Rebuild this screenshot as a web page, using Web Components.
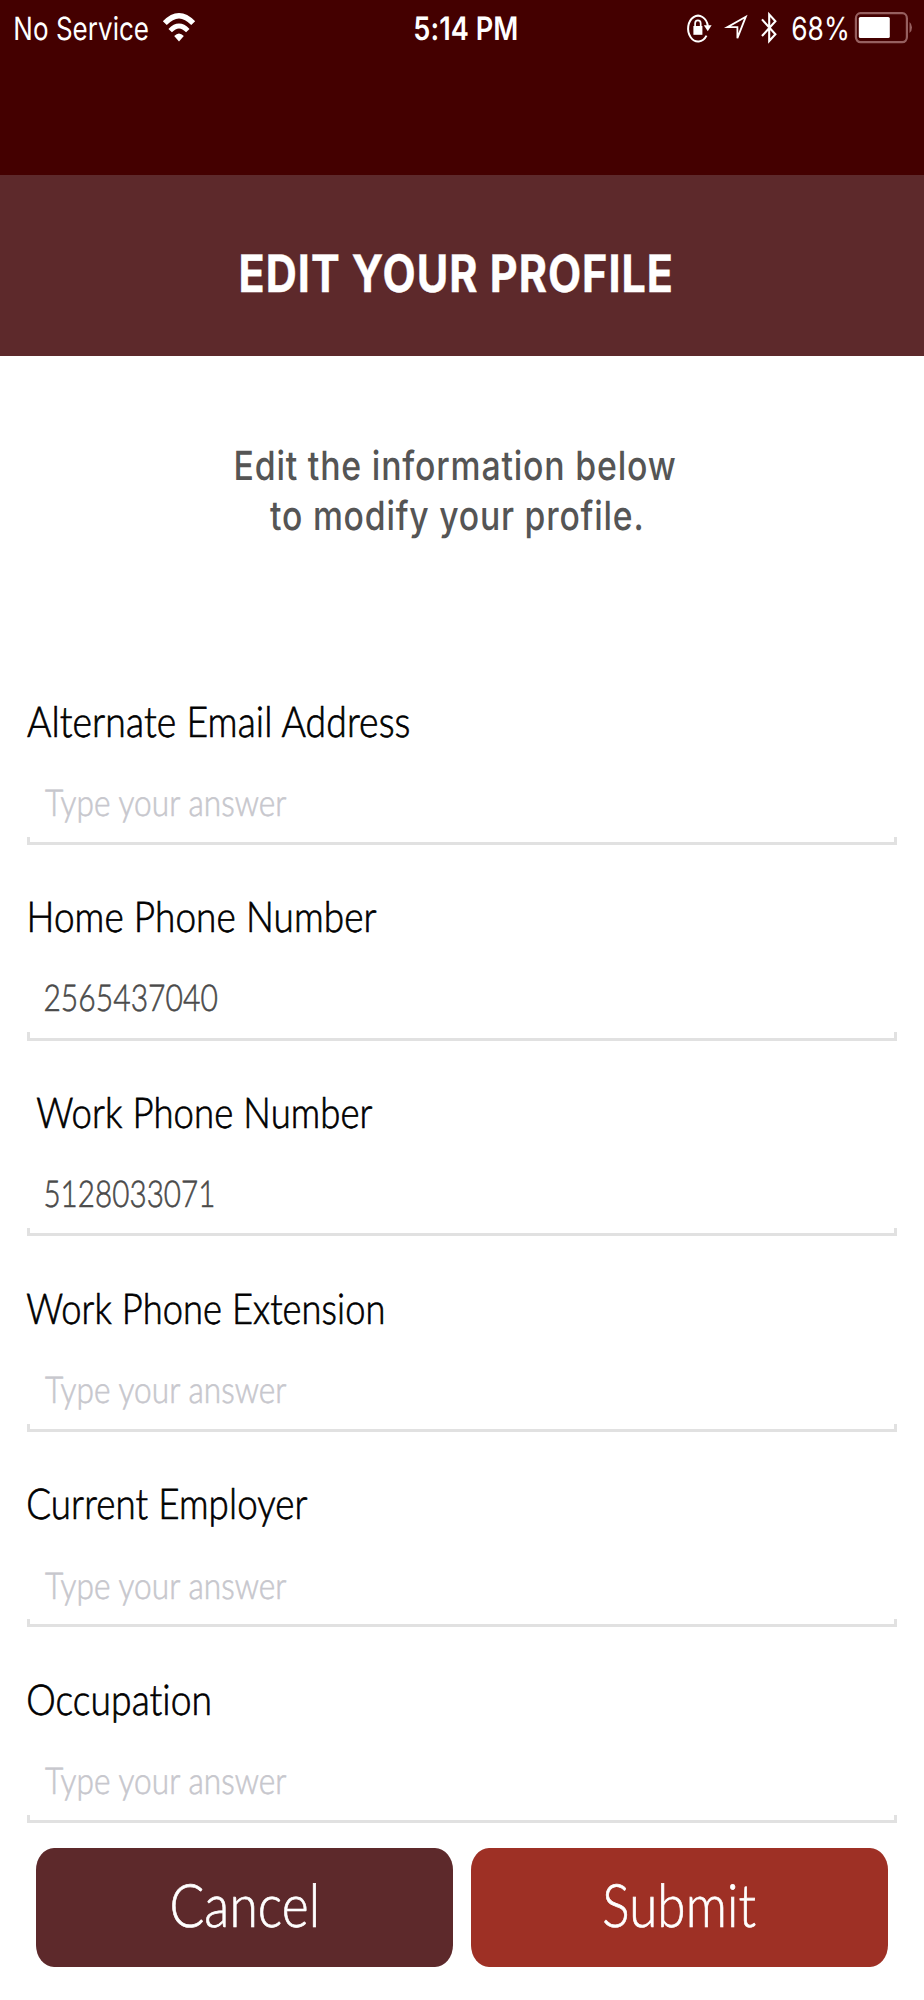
<!DOCTYPE html>
<html lang="en">
<head>
<meta charset="utf-8">
<title>Edit Your Profile</title>
<style>
html, body { margin: 0; background: #fff; }
body { width: 924px; height: 2000px; overflow: hidden; font-family: Lato, sans-serif; }
</style>
</head>
<body>
<profile-screen></profile-screen>
<script>
const CAP_RATIO = { Inter: 0.727, Lato: 0.7165 };
const pen = document.createElement('canvas').getContext('2d');

// Condensed text: the box is exactly the ink width by the capital height.
class FitText extends HTMLElement {
  connectedCallback() {
    if (this.shadowRoot) return;
    const face = this.getAttribute('face') || 'Lato';
    const weight = this.getAttribute('weight') || '300';
    const width = +this.getAttribute('width');
    const cap = +this.getAttribute('cap');
    const size = cap / CAP_RATIO[face];
    const spacing = (+this.getAttribute('spacing') || 0.002) * size;
    const stroke = (this.hasAttribute('stroke') ? +this.getAttribute('stroke') : face === 'Lato' ? 0.017 : 0) * size;
    const text = this.textContent.trim();
    pen.font = `${weight} ${size}px ${face}`;
    pen.textRendering = 'geometricPrecision';
    pen.letterSpacing = `${spacing}px`;
    const m = pen.measureText(text);
    const root = this.attachShadow({ mode: 'open' });
    root.innerHTML = `
      <style>
        :host { display: block; flex: none; width: ${width}px; height: ${cap}px; }
        span { display: block; width: max-content; white-space: nowrap;
          font: ${weight} ${size}px/${Math.round(size)}px ${face}, sans-serif; letter-spacing: ${spacing}px;
          -webkit-text-stroke: ${stroke}px currentColor;
          font-variant-ligatures: none; text-rendering: geometricPrecision; transform-origin: 0 0; }
        i { display: inline-block; width: 0; height: 0; }
      </style><span><slot></slot><i></i></span>`;
    const span = root.querySelector('span');
    const box = span.getBoundingClientRect();
    const baseline = root.querySelector('i').getBoundingClientRect().bottom - box.top;
    const ink = m.actualBoundingBoxRight + m.actualBoundingBoxLeft + box.width - m.width;
    const scale = width / ink;
    span.style.transform =
      `matrix(${scale}, 0, 0, 1, ${m.actualBoundingBoxLeft * scale}, ${cap - baseline})`;
  }
}
customElements.define('fit-text', FitText);

class StatusBar extends HTMLElement {
  connectedCallback() {
    this.attachShadow({ mode: 'open' }).innerHTML = `
      <style>
        :host { display: flex; align-items: flex-start; box-sizing: border-box; height: 174.5px;
          padding: 17.3px 0 0 15px; background: #440000; color: #fff; }
        svg { display: block; flex: none; margin-top: -7.3px; overflow: visible; }
        .wifi { margin-left: 13.5px; }
        .time { margin-left: 219px; }
        .lock { margin-left: 168px; }
        .arrow { margin-left: 12px; }
        .bt { margin-left: 11px; }
        .pct { margin-left: 14px; }
        .bat { margin-left: 7px; }
      </style>
      <fit-text face="Inter" weight="400" width="133.5" cap="23.2">No Service</fit-text>
      <svg class="wifi" width="34" height="36" viewBox="0 0 34 36" fill="none" stroke="#fff">
        <path d="M2.8 13.2Q17 -1.8 31.2 13.2" stroke-width="5.4"/>
        <path d="M8.2 20.6Q17 11.4 25.8 20.6" stroke-width="4.8"/>
        <path d="M12.2 26Q17 20.9 21.8 26L17 31.6Z" fill="#fff" stroke="none"/>
      </svg>
      <fit-text class="time" face="Inter" weight="600" width="102" cap="23.4">5:14 PM</fit-text>
      <svg class="lock" width="28" height="36" viewBox="0 0 28 36" fill="none" stroke="#fff" stroke-width="2">
        <path d="M21.5 25.6A10 12.9 0 1 1 22.9 16"/>
        <path d="M18.8 15.3H26.6L22.8 21.3Z" fill="#fff" stroke="none"/>
        <rect x="8.4" y="16" width="9" height="8.8" fill="#fff" stroke="none"/>
        <path d="M10.1 16.5V13.4Q10.1 10.3 12.9 10.3T15.7 13.4V16.5" stroke-width="1.7"/>
      </svg>
      <svg class="arrow" width="24" height="36" viewBox="0 0 24 36" fill="none" stroke="#fff" stroke-width="1.8">
        <path d="M20.8 6.7L2.4 17.1H12.4V28.2Z"/>
      </svg>
      <svg class="bt" width="18" height="36" viewBox="0 0 18 36" fill="none" stroke="#fff" stroke-width="2.1">
        <path d="M2 9.4L15.4 24.2L9.2 31V4.4L15.4 11.3L2 26"/>
      </svg>
      <fit-text class="pct" face="Inter" weight="400" width="55" cap="23.2">68%</fit-text>
      <svg class="bat" width="60" height="36" viewBox="0 0 60 36">
        <rect x="1.9" y="3.2" width="51" height="29" rx="4.6" ry="5.2" fill="none" stroke="#965f5f" stroke-width="2.2"/>
        <rect x="4.8" y="7" width="31" height="21" rx="1.6" fill="#fff"/>
        <path d="M55.5 12Q58 14 58 17.5T55.5 23Z" fill="#965f5f"/>
      </svg>`;
  }
}
customElements.define('status-bar', StatusBar);

class PageHeader extends HTMLElement {
  connectedCallback() {
    this.attachShadow({ mode: 'open' }).innerHTML = `
      <style>
        :host { display: flex; box-sizing: border-box; height: 181.7px; padding: 79px 0 0 241px;
          background: #5d292b; color: #fff; }
      </style>
      <fit-text face="Inter" weight="700" width="430" cap="37.6" spacing=".024" stroke=".008">${this.getAttribute('heading')}</fit-text>`;
  }
}
customElements.define('page-header', PageHeader);

class ProfileIntro extends HTMLElement {
  connectedCallback() {
    this.attachShadow({ mode: 'open' }).innerHTML = `
      <style>
        :host { display: flex; flex-direction: column; align-items: center; gap: 20.2px;
          box-sizing: border-box; height: 349.6px; padding: 95.2px 13px 0 0; color: #555; }
      </style>
      <fit-text face="Inter" weight="500" width="439.5" cap="29.2" spacing=".024">Edit the information below</fit-text>
      <fit-text face="Inter" weight="500" width="371" cap="29.2" spacing=".024">to modify your profile.</fit-text>`;
  }
}
customElements.define('profile-intro', ProfileIntro);

class ProfileField extends HTMLElement {
  connectedCallback() {
    const at = n => this.getAttribute(n);
    const value = at('value');
    this.attachShadow({ mode: 'open' }).innerHTML = `
      <style>
        :host { display: flex; flex-direction: column; height: 139.4px; color: #000; }
        .label { margin-left: ${at('indent') || 0}px; }
        .value { margin: ${value ? 52.2 : 53}px 0 0 18.4px; color: ${value ? '#4a4a4a' : '#c7c7cd'}; }
        .rule { box-sizing: border-box; height: 8.4px; margin-top: auto; border: 3px solid #e1e1e1; border-top: 0; }
      </style>
      <fit-text class="label" width="${at('label-width')}" cap="30.5">${at('label')}</fit-text>
      <fit-text class="value" width="${value ? at('value-width') : 241.5}" cap="26.5">${value || 'Type your answer'}</fit-text>
      <div class="rule"></div>`;
  }
}
customElements.define('profile-field', ProfileField);

class ActionButton extends HTMLElement {
  connectedCallback() {
    this.attachShadow({ mode: 'open' }).innerHTML = `
      <style>
        :host { display: flex; justify-content: center; box-sizing: border-box; flex: 1; height: 119px;
          padding-top: 36.2px; border-radius: 18px / 22px; background: var(--tone); color: #fff; }
      </style>
      <fit-text width="${this.getAttribute('text-width')}" cap="42.9" stroke=".012">${this.getAttribute('label')}</fit-text>`;
  }
}
customElements.define('action-button', ActionButton);

class ProfileScreen extends HTMLElement {
  connectedCallback() {
    this.attachShadow({ mode: 'open' }).innerHTML = `
      <style>
        :host { display: flex; flex-direction: column; width: 924px; height: 2000px; background: #fff; }
        form { display: flex; flex-direction: column; gap: 56.2px; margin: 0 27px; }
        footer { display: flex; gap: 18px; margin: 24.8px 36px 0; }
        status-bar, page-header, profile-intro, profile-field { flex: none; }
        .cancel { --tone: #5d292b; }
        .submit { --tone: #9e3025; }
      </style>
      <status-bar></status-bar>
      <page-header heading="EDIT YOUR PROFILE"></page-header>
      <profile-intro></profile-intro>
      <form>
        <profile-field label="Alternate Email Address" label-width="382.5"></profile-field>
        <profile-field label="Home Phone Number" indent="3" label-width="346.5" value="2565437040" value-width="172.5"></profile-field>
        <profile-field label="Work Phone Number" indent="10" label-width="335.5" value="5128033071" value-width="168.5"></profile-field>
        <profile-field label="Work Phone Extension" label-width="356.5"></profile-field>
        <profile-field label="Current Employer" indent="1.3" label-width="279.5"></profile-field>
        <profile-field label="Occupation" indent="1.3" label-width="182"></profile-field>
      </form>
      <footer>
        <action-button class="cancel" label="Cancel" text-width="144.5"></action-button>
        <action-button class="submit" label="Submit" text-width="151.5"></action-button>
      </footer>`;
  }
}
customElements.define('profile-screen', ProfileScreen);
</script>
</body>
</html>
